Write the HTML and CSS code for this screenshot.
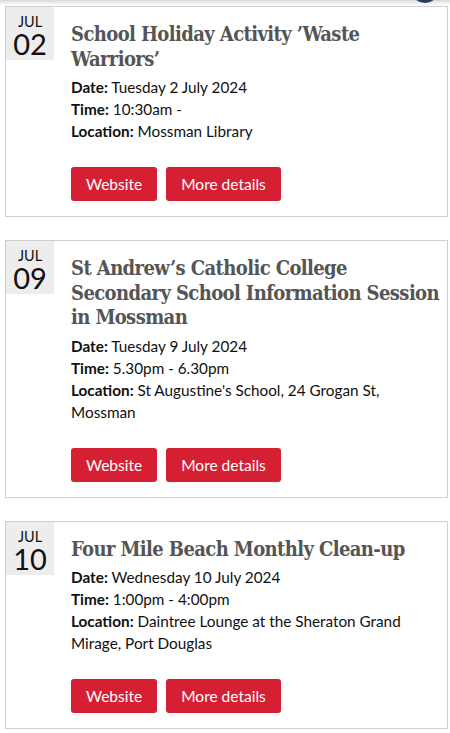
FILE: index.html
```html
<!DOCTYPE html>
<html lang="en">
<head>
<meta charset="utf-8">
<title>Events</title>
<link rel="stylesheet" href="styles.css">
</head>
<body>
<div class="topshade"></div>
<div class="navdot"></div>
<main class="events">
  <article class="card">
    <div class="date"><span class="mon">JUL</span><span class="day">02</span></div>
    <div class="body">
      <h2 class="title">School Holiday Activity ’Waste Warriors’</h2>
      <div class="info">
        <div class="line"><b>Date:</b> Tuesday 2 July 2024</div>
        <div class="line"><b>Time:</b> 10:30am -</div>
        <div class="line"><b>Location:</b> Mossman Library</div>
      </div>
      <div class="actions"><a class="btn">Website</a><a class="btn">More details</a></div>
    </div>
  </article>
  <article class="card">
    <div class="date"><span class="mon">JUL</span><span class="day">09</span></div>
    <div class="body">
      <h2 class="title">St Andrew’s Catholic College Secondary School Information Session in Mossman</h2>
      <div class="info">
        <div class="line"><b>Date:</b> Tuesday 9 July 2024</div>
        <div class="line"><b>Time:</b> 5.30pm - 6.30pm</div>
        <div class="line"><b>Location:</b> St Augustine's School, 24 Grogan St, Mossman</div>
      </div>
      <div class="actions"><a class="btn">Website</a><a class="btn">More details</a></div>
    </div>
  </article>
  <article class="card">
    <div class="date"><span class="mon">JUL</span><span class="day">10</span></div>
    <div class="body">
      <h2 class="title">Four Mile Beach Monthly Clean-up</h2>
      <div class="info">
        <div class="line"><b>Date:</b> Wednesday 10 July 2024</div>
        <div class="line"><b>Time:</b> 1:00pm - 4:00pm</div>
        <div class="line"><b>Location:</b> Daintree Lounge at the Sheraton Grand Mirage, Port Douglas</div>
      </div>
      <div class="actions"><a class="btn">Website</a><a class="btn">More details</a></div>
    </div>
  </article>
</main>
</body>
</html>
```
FILE: styles.css
```css
html, body {
  margin: 0;
  padding: 0;
  background: #fff;
}
body {
  font-family: Lato, "Liberation Sans", sans-serif;
  color: #111;
  position: relative;
  overflow: hidden;
}
.topshade {
  height: 6px;
  background: linear-gradient(#d9d9d9, #f4f4f4 60%, #fff);
}
.navdot {
  position: absolute;
  top: -20px;
  left: 412px;
  width: 26px;
  height: 23px;
  border-radius: 50%;
  background: #2b3a63;
}
.events {
  padding: 0 2px 0 5px;
}
.card {
  display: flex;
  align-items: flex-start;
  border: 1px solid #cfcfcf;
  margin-bottom: 23px;
}
.date {
  flex: 0 0 48px;
  height: 53px;
  background: #ededed;
  display: flex;
  flex-direction: column;
  align-items: center;
  color: #111;
}
.mon {
  font-size: 14.5px;
  line-height: 15px;
  margin-top: 7px;
}
.day {
  font-size: 29px;
  line-height: 29px;
}
.body {
  flex: 1;
  padding: 15px 3px 15px 17px;
}
.title {
  margin: 0;
  font-family: "DejaVu Serif Condensed", "DejaVu Serif", serif;
  font-stretch: condensed;
  font-weight: bold;
  font-size: 20px;
  letter-spacing: -0.6px;
  line-height: 24.5px;
  color: #555;
}
.info {
  margin-top: 5px;
  font-size: 15.3px;
  line-height: 22px;
}
.line b {
  font-weight: bold;
}
.actions {
  display: flex;
  gap: 9px;
  margin-top: 25px;
}
.btn {
  display: block;
  background: #d51f33;
  color: #fff;
  border-radius: 3px;
  font-size: 15.5px;
  line-height: 34px;
  height: 34px;
  padding: 0 15px;
}
```
